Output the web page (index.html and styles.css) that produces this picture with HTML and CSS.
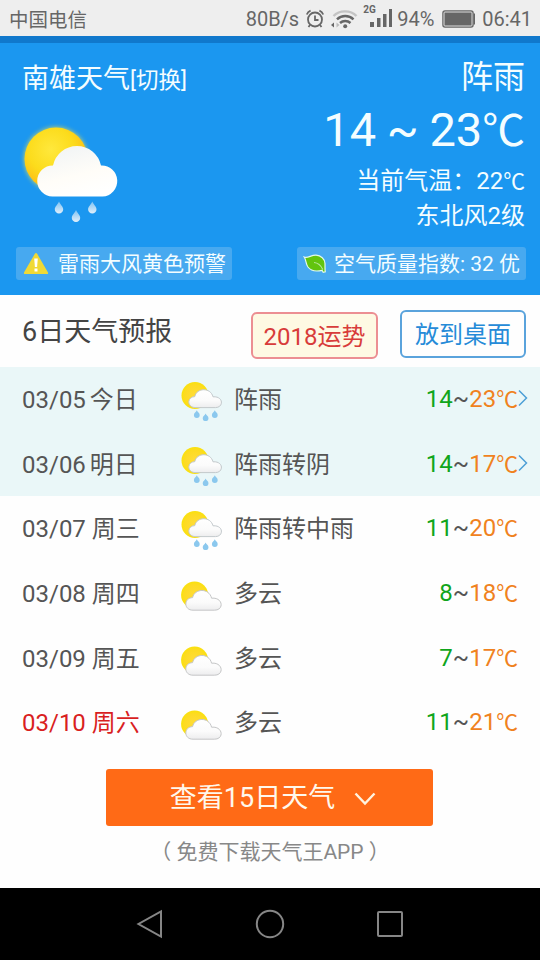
FILE: index.html
```html
<!DOCTYPE html>
<html lang="zh-CN">
<head>
<meta charset="utf-8">
<title>南雄天气</title>
<link rel="stylesheet" href="styles.css">
</head>
<body>
<svg class="defs" width="0" height="0" aria-hidden="true">
  <defs>
    <radialGradient id="sun" cx=".42" cy=".35" r=".65"><stop offset="0" stop-color="#ffe83c"/><stop offset=".55" stop-color="#fcdc1c"/><stop offset="1" stop-color="#fdb913"/></radialGradient>
    <radialGradient id="sun-small" cx=".5" cy=".5" r=".55"><stop offset="0" stop-color="#ffdc3a"/><stop offset=".7" stop-color="#fddb22"/><stop offset="1" stop-color="#f8e400"/></radialGradient>
    <linearGradient id="cloud" x1=".2" y1="0" x2=".6" y2="1"><stop offset="0" stop-color="#fdf3d6"/><stop offset=".15" stop-color="#f4f6f6"/><stop offset=".6" stop-color="#fffdf8"/><stop offset="1" stop-color="#fff"/></linearGradient>
    <linearGradient id="cloud-small" x1="0" y1="0" x2="0" y2="1"><stop offset="0" stop-color="#fff"/><stop offset=".6" stop-color="#fbfbfb"/><stop offset="1" stop-color="#ededee"/></linearGradient>
    <linearGradient id="drop" x1="0" y1="0" x2="0" y2="1"><stop offset="0" stop-color="#7fc3f3"/><stop offset="1" stop-color="#e2effa"/></linearGradient>
    <filter id="glow" x="-20%" y="-20%" width="140%" height="140%"><feGaussianBlur stdDeviation="2"/></filter>
    <symbol id="rain" viewBox="0 0 44 44">
      <circle cx="15" cy="18.5" r="13.5" fill="url(#sun-small)"/>
      <path d="M15.500 30.600C7 30.600 6.500 20 14.800 19.600C16.500 10.800 30.500 10 33 19.800C43.800 19 43.800 30.600 35.500 30.600Z" fill="url(#cloud-small)" stroke="#c3c9cc" stroke-width="1"/>
      <g fill="#8bc8ee"><path id="d" d="M16.800 33.300C17.400 35 19.700 36 19.700 38A2.900 2.900 0 0 1 13.900 38C13.900 36 16.200 35 16.800 33.300Z"/><use href="#d" x="8.800" y="3.200"/><use href="#d" x="18"/></g>
    </symbol>
    <symbol id="cloudy" viewBox="0 0 44 44">
      <circle cx="14.6" cy="24" r="13.5" fill="url(#sun-small)"/>
      <path d="M13 39.200C3.500 39.200 3.500 27 12.600 26.600C14.500 17.500 29 16.500 31.600 27.200C43 26 44.500 39.200 34.500 39.200Z" fill="url(#cloud-small)" stroke="#c5c6c7" stroke-width="1"/>
    </symbol>
  </defs>
</svg>

<header class="status">
  <span class="carrier">中国电信</span>
  <span class="speed">80B/s</span>
  <svg class="alarm" width="20" height="20" viewBox="0 0 20 20" fill="none" stroke="#666" stroke-width="1.8"><circle cx="10" cy="10.500" r="7"/><path d="M10 6.500V11H13.500M1.800 5.500C2.500 3.600 4 2.300 5.600 1.700M18.200 5.500C17.500 3.600 16 2.300 14.400 1.700M5 16L3.500 18M15 16l1.500 2"/></svg>
  <svg class="wifi" width="28" height="20" viewBox="0 0 28 20" fill="none"><path d="M3.500 7C9.500.800 20.500.800 26.500 7" stroke="#c4c4c4" stroke-width="2.400"/><path d="M7 10.300C11.500 5.800 19 5.800 23.500 10.300M10 14C13 11.300 17.500 11.300 20.500 14" stroke="#666" stroke-width="2.400"/><circle cx="15.200" cy="17.200" r="2" fill="#666"/><path d="M4 13.500V18.500L1 16Z" fill="#666"/><path d="M6.500 13.500V18.500L9.500 16Z" fill="#bbb"/></svg>
  <span class="net">2G</span>
  <svg class="signal" width="23" height="19" viewBox="0 0 23 19" fill="#666"><path d="M0 13h4v5H0zM7 9h3.500v9H7zM13 5h3.500v13H13zM19 0h3v18h-3z"/></svg>
  <span class="percent">94%</span>
  <svg class="battery" width="34" height="18" viewBox="0 0 34 18"><rect x="1" y="1" width="30" height="16" rx="2" fill="#666" stroke="#666" stroke-width="1.500"/><rect x="2" y="2" width="28" height="14" rx="1" fill="none" stroke="#ddd"/><path d="M31.500 3.500h1.500v11h-1.500z" fill="#666"/></svg>
  <span class="clock">06:41</span>
</header>

<section class="now">
  <div class="top">
    <div class="place">
      <h1>南雄天气<a>[切换]</a></h1>
      <svg class="big-icon" width="110" height="110" viewBox="16 118 110 110">
        <circle cx="56" cy="159" r="32" fill="#e8df50" opacity=".75" filter="url(#glow)"/>
        <circle cx="56" cy="159" r="31.500" fill="url(#sun)"/>
        <path d="M52.500 196.500A15.500 15.500 0 0 1 53 165.500A24.500 24.500 0 0 1 101 165.500A15.500 15.500 0 0 1 102.500 196.500Z" fill="url(#cloud)"/>
        <g fill="url(#drop)"><path id="bd" d="M59 201.500C60.500 205 63.200 206.500 63.200 209.400A4.200 4.200 0 0 1 54.800 209.400C54.800 206.500 57.500 205 59 201.500Z"/><use href="#bd" x="17" y="8.500"/><use href="#bd" x="33.300"/></g>
      </svg>
    </div>
    <div class="reading">
      <p class="cond">阵雨</p>
      <p class="range">14 ~ 23<span class="unit">℃</span></p>
      <p class="current">当前气温：<span>22<span class="unit">℃</span></span></p>
      <p class="wind">东北风2级</p>
    </div>
  </div>
  <div class="tags">
    <div class="tag warn">
      <svg width="26" height="23" viewBox="0 0 26 23"><path d="M12 1.500Q13 .300 14 1.500L25 20.500Q25.500 22 24 22H2Q.500 22 1 20.500Z" fill="#f0d936"/><path d="M11.200 6.500h3.600l-.7 8.500h-2.200zM11.500 16.500h3v3h-3z" fill="#fff"/></svg>
      <span>雷雨大风黄色预警</span>
    </div>
    <div class="tag air">
      <svg width="24" height="20" viewBox="0 0 24 20"><path d="M1.200 3C5 4.500 8 1 13 1.200C18 1.500 21.800 5 22 9.500C22.100 12.500 21.800 15 22.300 17.800L20.200 18.300L19 16.300C14 17.500 8 17 5 13C2.500 9.500 3.300 6 1.200 3Z" fill="#62c40e" stroke="#e4f9e9" stroke-width="1.200"/><path d="M11 8.500C15 8.800 18 11.500 19.800 15.500" fill="none" stroke="#b5e69a" stroke-width="1.100"/></svg>
      <span>空气质量指数: 32 优</span>
    </div>
  </div>
</section>

<section class="forecast">
  <div class="heading">
    <h2>6日天气预报</h2>
    <a class="btn luck">2018运势</a>
    <a class="btn desk">放到桌面</a>
  </div>
  <ul>
    <li class="hl"><span class="date">03/05 今日</span><svg class="ico"><use href="#rain"/></svg><span class="desc">阵雨</span><span class="temp"><b>14</b>~<i>23<span class="unit">℃</span></i></span><svg class="more" viewBox="0 0 10 18"><path d="M1 1.500L8.500 9L1 16.500"/></svg></li>
    <li class="hl"><span class="date">03/06 明日</span><svg class="ico"><use href="#rain"/></svg><span class="desc">阵雨转阴</span><span class="temp"><b>14</b>~<i>17<span class="unit">℃</span></i></span><svg class="more" viewBox="0 0 10 18"><path d="M1 1.500L8.500 9L1 16.500"/></svg></li>
    <li><span class="date">03/07 周三</span><svg class="ico"><use href="#rain"/></svg><span class="desc">阵雨转中雨</span><span class="temp"><b>11</b>~<i>20<span class="unit">℃</span></i></span></li>
    <li><span class="date">03/08 周四</span><svg class="ico"><use href="#cloudy"/></svg><span class="desc">多云</span><span class="temp"><b>8</b>~<i>18<span class="unit">℃</span></i></span></li>
    <li><span class="date">03/09 周五</span><svg class="ico"><use href="#cloudy"/></svg><span class="desc">多云</span><span class="temp"><b>7</b>~<i>17<span class="unit">℃</span></i></span></li>
    <li><span class="date weekend">03/10 周六</span><svg class="ico"><use href="#cloudy"/></svg><span class="desc">多云</span><span class="temp"><b>11</b>~<i>21<span class="unit">℃</span></i></span></li>
  </ul>
  <a class="cta"><span>查看15日天气</span><svg width="22" height="14" viewBox="0 0 22 14"><path d="M1.500 1.500L11 11.500L20.500 1.500" fill="none" stroke="#fff3e0" stroke-width="2.400"/></svg></a>
  <p class="note">（ 免费下载天气王APP ）</p>
</section>

<nav class="keys">
  <svg width="28" height="30" viewBox="0 0 28 30"><path d="M25 2.500V27.500L2.500 15Z"/></svg>
  <svg width="30" height="30" viewBox="0 0 30 30"><circle cx="15" cy="15" r="13.200"/></svg>
  <svg width="28" height="28" viewBox="0 0 28 28"><rect x="2" y="2" width="24" height="24" rx="1"/></svg>
</nav>
</body>
</html>
```
FILE: styles.css
```css
* { box-sizing: border-box; margin: 0; padding: 0; }
body {
  width: 540px;
  height: 960px;
  overflow: hidden;
  display: flex;
  flex-direction: column;
  background: #fefefe;
  font-family: Roboto, "Noto Sans CJK SC", sans-serif;
  white-space: nowrap;
}
svg { display: block; flex: none; }
.defs { position: absolute; }
.unit { font-size: .91em; }

.status {
  height: 36px;
  flex: none;
  display: flex;
  align-items: center;
  padding: 1px 8px 0 9px;
  background: #eee;
  color: #666;
  font-size: 20px;
}
.carrier { font-size: 19.5px; }
.speed { margin-left: auto; }
.alarm { margin-left: 6px; }
.wifi { margin-left: 5px; }
.net { align-self: flex-start; margin: 3px 0 0 5px; width: 7px; font-size: 10px; font-weight: 700; line-height: 12px; }
.signal { margin: 0 4px 0 0; }
.percent { width: 39px; }
.battery { margin: 0 6px; }

.now {
  height: 259px;
  flex: none;
  padding: 11px 15px 0 16px;
  border-top: 7px solid #1078cc;
  background: #1b97f0;
  color: #f4fdff;
}
.top { display: flex; justify-content: space-between; height: 193px; }
.place h1 { padding-left: 6px; font-size: 27px; font-weight: 400; line-height: 50px; }
.place a { font-size: 22.5px; }
.big-icon { margin-top: 13px; }
.reading { text-align: right; }
.cond { font-size: 32px; line-height: 46px; }
.range { height: 60px; font-size: 47px; line-height: 60px; word-spacing: -1px; }
.current { height: 42px; font-size: 24px; line-height: 42px; }
.wind { font-size: 24px; line-height: 29px; }
.tags { display: flex; justify-content: space-between; margin-right: -1px; }
.tag {
  height: 33px;
  display: flex;
  align-items: center;
  border-radius: 3px;
  background: #47a9f0;
  font-size: 21px;
}
.tag span { padding-bottom: 4px; }
.warn { width: 216px; padding-left: 7px; gap: 9px; }
.air { width: 229px; padding-left: 6px; gap: 7px; }

.forecast { height: 593px; flex: none; }
.heading { height: 72px; display: flex; align-items: flex-start; padding: 15px 14px 0 22px; }
.heading h2 { font-size: 27px; font-weight: 400; line-height: 44px; color: #444; }
.btn { height: 47px; border-radius: 6px; font-size: 24px; text-align: center; line-height: 46px; }
.luck { width: 127px; margin: 2px 0 0 auto; border: 2px solid #ec8e92; background: #fef9e3; color: #d83c3a; }
.desk { width: 126px; height: 48px; margin-left: 22px; border: 2px solid #5aa3dc; color: #258bd8; }
ul { list-style: none; }
li { height: 64.6px; display: flex; align-items: center; padding: 0 22px; position: relative; font-size: 24px; color: #555; }
li span { padding-bottom: 3px; }
li .unit { padding: 0; }
.hl { background: #eaf7f8; }
.date { width: 158px; }
.hl .date { word-spacing: -2px; }
.weekend { color: #d91f1f; }
.ico { width: 44px; height: 44px; }
.desc { margin-left: 10px; }
.temp { margin-left: auto; }
.temp b { font-weight: 400; color: #10a51b; }
.temp i { font-style: normal; color: #f0821e; }
.more { position: absolute; right: 12px; top: 22px; width: 10px; height: 18px; fill: none; stroke: #4d9fd6; stroke-width: 1.5; }
.cta {
  width: 327px;
  height: 57px;
  margin: 14px auto 0 106px;
  padding-left: 7px;
  display: flex;
  align-items: center;
  justify-content: center;
  gap: 19px;
  border-radius: 3px;
  background: #ff6a16;
  color: #fff8ec;
  font-size: 27px;
}
.cta span { padding-bottom: 4px; }
.cta svg { margin-top: 4px; }
.note { margin-top: 11px; text-align: center; font-size: 21px; line-height: 30px; color: #888; }

.keys { height: 72px; flex: none; display: flex; align-items: center; background: #000; padding-left: 136px; }
.keys svg { fill: none; stroke: #868686; stroke-width: 2; }
.keys svg + svg { margin-left: 91px; }
```
